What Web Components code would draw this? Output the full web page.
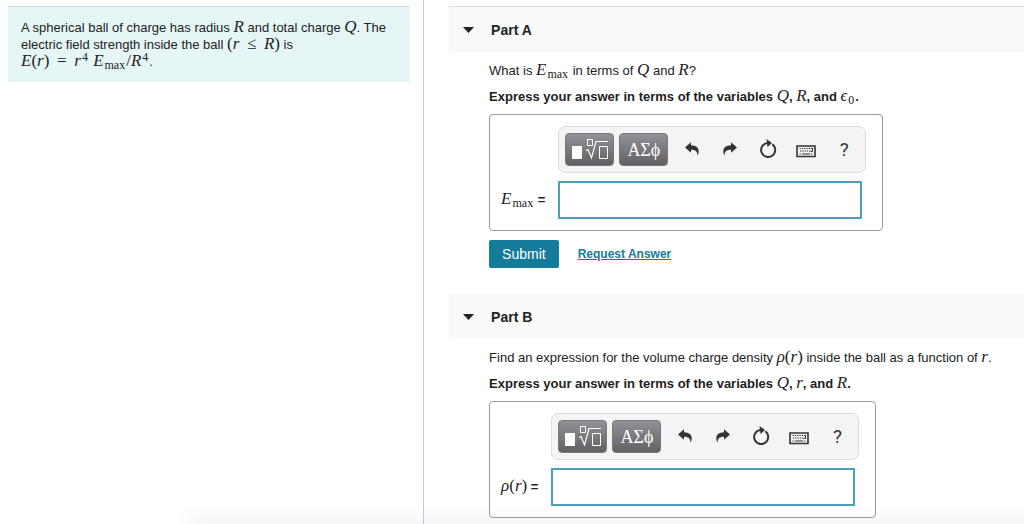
<!DOCTYPE html>
<html lang="en">
<head>
<meta charset="utf-8">
<title>Spherical ball of charge</title>
<style>
  * { box-sizing: border-box; }
  body {
    margin: 0;
    height: 100vh;
    overflow: hidden;
    background: #fff;
    color: #222;
    font: 13px/16px "Liberation Sans", Arial, sans-serif;
  }
</style>
</head>
<body>
<problem-page>
  <problem-intro slot="intro">
    A spherical ball of charge has radius <math-text><i>R</i></math-text> and total charge <math-text><i>Q</i></math-text>. The
    electric field strength inside the ball <math-text>(<i>r</i>&thinsp; ≤ &thinsp;<i>R</i>)</math-text> is
    <math-text><i>E</i>(<i>r</i>)&thinsp; = &thinsp;<i>r</i><sup>4</sup> <i>E</i><sub>max</sub>/<i>R</i><sup>4</sup></math-text>.
  </problem-intro>

  <problem-part heading="Part A">
    <span slot="question">What is <math-text><i>E</i><sub>max</sub></math-text> in terms of <math-text><i>Q</i></math-text> and <math-text><i>R</i></math-text>?</span>
    <span slot="hint">Express your answer in terms of the variables <math-text><i>Q</i></math-text>, <math-text><i>R</i></math-text>, and <math-text><i>ϵ</i><sub>0</sub></math-text>.</span>
    <answer-box><math-text><i>E</i><sub>max</sub></math-text> =</answer-box>
    <answer-actions></answer-actions>
  </problem-part>

  <problem-part heading="Part B">
    <span slot="question">Find an expression for the volume charge density <math-text><i>ρ</i>(<i>r</i>)</math-text> inside the ball as a function of <math-text><i>r</i></math-text>.</span>
    <span slot="hint">Express your answer in terms of the variables <math-text><i>Q</i></math-text>, <math-text><i>r</i></math-text>, and <math-text><i>R</i></math-text>.</span>
    <answer-box><math-text><i>ρ</i>(<i>r</i>)</math-text> =</answer-box>
  </problem-part>
</problem-page>

<script>
class ProblemPage extends HTMLElement {
  constructor() {
    super();
    this.attachShadow({ mode: "open" });
    this.shadowRoot.innerHTML = `
      <style>
        :host {
          display: grid;
          grid-template-columns: minmax(0, 41fr) minmax(0, 58fr);
          height: 100%;
          overflow: hidden;
        }
        aside { padding: 6px 13px 0 8px; border-right: 1px solid #c3cddd; }
        main { padding: 6px 0 0 25px; }
        .fade {
          position: fixed;
          right: 0;
          bottom: 0;
          left: 17%;
          height: 20px;
          pointer-events: none;
          background: linear-gradient(transparent, rgba(0, 0, 0, 0.03));
          mask-image: linear-gradient(to right, transparent, #000 30px);
        }
      </style>
      <aside><slot name="intro"></slot></aside>
      <main><slot></slot></main>
      <div class="fade"></div>
    `;
  }
}

class ProblemIntro extends HTMLElement {
  constructor() {
    super();
    this.attachShadow({ mode: "open" });
    this.shadowRoot.innerHTML = `
      <style>
        :host {
          display: block;
          padding: 12px 13px;
          border-top: 1px solid #d6dcdc;
          background: #e6f6f7;
        }
        p { margin: 0; line-height: 17px; }
      </style>
      <p><slot></slot></p>
    `;
  }
}

class MathText extends HTMLElement {
  constructor() {
    super();
    this.attachShadow({ mode: "open" });
    this.shadowRoot.innerHTML = `
      <style>
        :host {
          font: 17px/1 "Liberation Serif", "Times New Roman", serif;
          line-height: 0;
          white-space: nowrap;
        }
        ::slotted(sub), ::slotted(sup) { margin: 0 1px; font-size: 12px; line-height: 0; }
        ::slotted(sub) { vertical-align: -3px; }
        ::slotted(sup) { vertical-align: 5px; }
      </style>
      <slot></slot>`;
  }
}

class ProblemPart extends HTMLElement {
  constructor() {
    super();
    this.attachShadow({ mode: "open" });
    this.shadowRoot.innerHTML = `
      <style>
        :host { display: block; margin-bottom: 26px; }
        h2 { margin: 0; }
        button {
          display: flex;
          align-items: center;
          gap: 17px;
          width: 100%;
          height: 45px;
          padding: 0 14px;
          border: 0;
          background: #f9f9f9;
          color: #222;
          font: bold 14px/16px "Liberation Sans", Arial, sans-serif;
          text-align: left;
          cursor: pointer;
        }
        :host(:first-of-type) h2 { border-top: 1px solid #d8dcdc; }
        button[aria-expanded="false"] svg { transform: rotate(-90deg); }
        .content { padding: 11px 0 0 40px; }
        .content[hidden] { display: none; }
        p { margin: 0 0 10px; }
        .hint { margin-bottom: 9px; font-weight: bold; }
      </style>
      <h2>
        <button type="button" aria-expanded="true">
          <svg width="11" height="6" viewBox="0 0 11 6" aria-hidden="true"><path d="M0 0h11L5.500 6z" fill="#222"/></svg>
          <span class="heading"></span>
        </button>
      </h2>
      <div class="content">
        <p><slot name="question"></slot></p>
        <p class="hint"><slot name="hint"></slot></p>
        <slot></slot>
      </div>
    `;
    this.toggleEl = this.shadowRoot.querySelector("button");
    this.contentEl = this.shadowRoot.querySelector(".content");
  }

  connectedCallback() {
    this.shadowRoot.querySelector(".heading").textContent = this.getAttribute("heading");
    this.toggleEl.onclick = () => this.toggle();
  }

  toggle() {
    this.contentEl.hidden = !this.contentEl.hidden;
    this.toggleEl.setAttribute("aria-expanded", String(!this.contentEl.hidden));
  }
}

class MathToolbar extends HTMLElement {
  constructor() {
    super();
    this.attachShadow({ mode: "open" });
    this.shadowRoot.innerHTML = `
      <style>
        :host {
          display: flex;
          align-items: center;
          gap: 5px;
          padding: 6px 2px 6px 6px;
          border: 1px solid #dcdcdc;
          border-radius: 7px;
          background: #f4f4f4;
        }
        button {
          display: flex;
          align-items: center;
          justify-content: center;
          width: 38px;
          height: 33px;
          padding: 0;
          border: 0;
          background: none;
          color: #333;
          cursor: pointer;
        }
        .palette {
          width: 49px;
          border: 1px solid #77777b;
          border-radius: 4px;
          background: linear-gradient(#929198, #616164);
          color: #fff;
          font: 18px/20px "Liberation Serif", "Times New Roman", serif;
        }
        .icons { display: flex; }
        .help { font: 19px/20px Roboto, sans-serif; }
      </style>
      <button type="button" class="palette" aria-label="Templates">
        <svg width="38" height="24" viewBox="0 0 38 24" fill="none" stroke="#fff">
          <path d="M1 8h10v13H1z" fill="#fff" stroke="none"/>
          <path d="M16.500 1.500h5v6h-5z"/>
          <path d="M15 12.500l2-1 3.500 8.500 4.500-16.500h12" stroke-width="1.200"/>
          <path d="M28.500 8.500h8v12h-8z"/>
        </svg>
      </button>
      <button type="button" class="palette">ΑΣϕ</button>
      <div class="icons">
        <button type="button" aria-label="Undo">
          <svg width="14" height="16" viewBox="0 0 14 16" fill="#333"><path d="M0 5.500L6 .2v3.100c5 .2 7.700 2.500 7.700 6 0 1.700-.5 3-1.300 4.500.3-4-1.700-6-6.400-6v3z"/></svg>
        </button>
        <button type="button" aria-label="Redo">
          <svg width="14" height="16" viewBox="0 0 14 16" fill="#333"><path d="M14 5.500L8 .2v3.100c-5 .2-7.700 2.500-7.700 6 0 1.700.5 3 1.300 4.500-.3-4 1.700-6 6.400-6v3z"/></svg>
        </button>
        <button type="button" aria-label="Reset">
          <svg width="18" height="21" viewBox="0 0 18 21"><path d="M13.300 5.300A7 7 0 1 1 8.500 4" fill="none" stroke="#333" stroke-width="2"/><path d="M7.500 0l5.500 4-4.500 4z" fill="#333"/></svg>
        </button>
        <button type="button" aria-label="Keyboard shortcuts">
          <svg width="20" height="16" viewBox="0 0 20 16" fill="none" stroke="#333">
            <path d="M1 4h18v10.500H1z" stroke-width="1.600"/>
            <path d="M3.500 6.500h13M4 9h11M3.500 12h2M15 12h2" stroke-dasharray="1.300 1"/>
            <path d="M6 12h8M16.500 6v3.500h-2"/>
          </svg>
        </button>
        <button type="button" class="help">?</button>
      </div>
    `;
  }
}

class AnswerBox extends HTMLElement {
  constructor() {
    super();
    this.attachShadow({ mode: "open" });
    this.shadowRoot.innerHTML = `
      <style>
        :host {
          display: grid;
          grid-template-columns: auto auto;
          gap: 8px 13px;
          align-items: center;
          width: fit-content;
          padding: 11px 16px 11px 11px;
          border: 1px solid #999;
          border-radius: 4px;
        }
        math-toolbar { grid-column: 2; }
        label { font-weight: bold; white-space: nowrap; }
        input {
          box-sizing: border-box;
          width: calc(100% - 4px);
          height: 38px;
          padding: 4px 8px;
          border: 2px solid #4d9fb9;
          background: #fff;
          font: inherit;
        }
      </style>
      <math-toolbar></math-toolbar>
      <label for="answer"><slot></slot></label>
      <input id="answer" type="text" autocomplete="off">
    `;
  }
}

class AnswerActions extends HTMLElement {
  constructor() {
    super();
    this.attachShadow({ mode: "open" });
    this.shadowRoot.innerHTML = `
      <style>
        :host { display: flex; align-items: center; gap: 19px; padding-top: 9px; }
        button {
          height: 28px;
          padding: 0 13px;
          border: 0;
          border-radius: 2px;
          background: #147b9b;
          color: #fff;
          font: 14px/16px "Liberation Sans", Arial, sans-serif;
        }
        a { color: #147b9b; font-size: 12px; font-weight: bold; }
      </style>
      <button type="button">Submit</button>
      <a href="#">Request Answer</a>
    `;
  }
}

customElements.define("math-text", MathText);
customElements.define("math-toolbar", MathToolbar);
customElements.define("answer-box", AnswerBox);
customElements.define("answer-actions", AnswerActions);
customElements.define("problem-intro", ProblemIntro);
customElements.define("problem-part", ProblemPart);
customElements.define("problem-page", ProblemPage);
</script>
</body>
</html>
